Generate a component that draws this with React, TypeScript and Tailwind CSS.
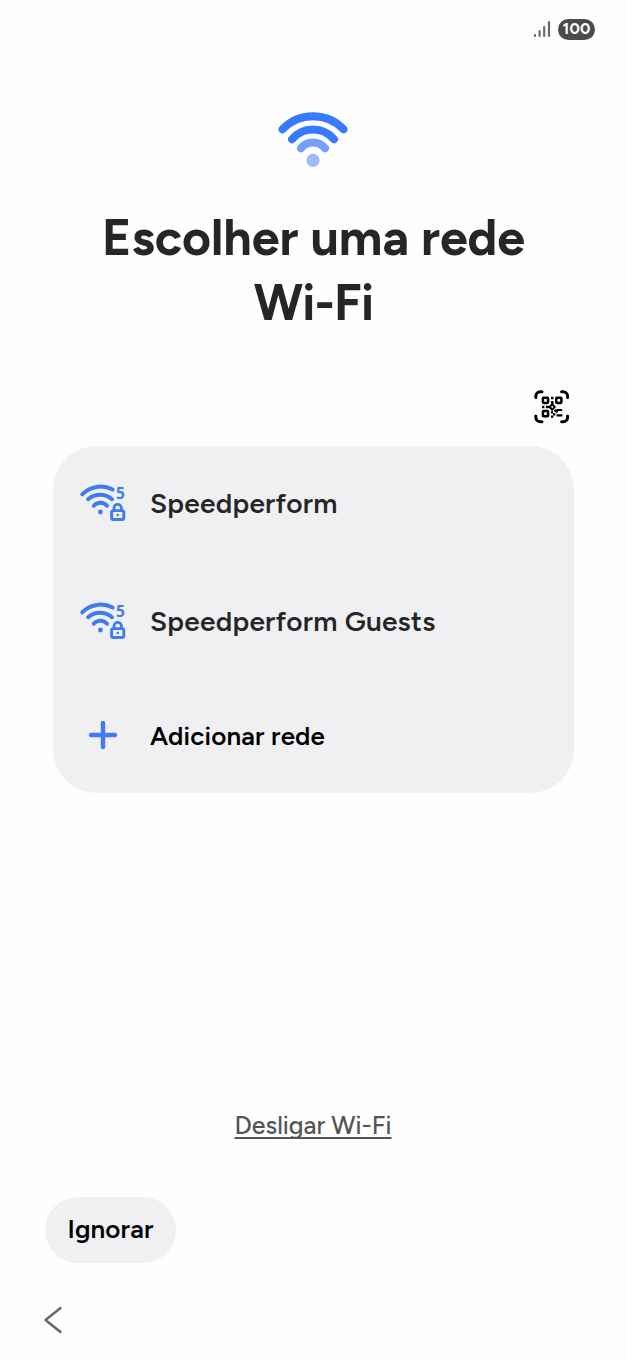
import React from 'react';

interface Network {
  ssid: string;
  band: string;
}

const networks: Network[] = [
  { ssid: 'Speedperform', band: '5' },
  { ssid: 'Speedperform Guests', band: '5' },
];

function StatusBar() {
  return (
    <div className="flex h-[58px] items-center justify-end gap-[7px] pr-8">
      <svg width="18" height="20" viewBox="0 0 18 20" fill="none" stroke="#6b6b6b" strokeWidth="2.2" strokeLinecap="round">
        <path d="M2 16v1M6.6 12.2V17M11.2 8V17M16 3V17" />
      </svg>
      <div className="flex h-[21px] w-[37px] items-center justify-center rounded-full bg-[#4b4b4b] text-[16px] font-bold tracking-[0.1px] text-white">
        100
      </div>
    </div>
  );
}

function WifiLogo() {
  return (
    <svg width="72" height="58" viewBox="0 0 72 58" fill="none" strokeWidth="8" strokeLinecap="round">
      <path d="M5.5 19.3A42.3 42.3 0 0 1 66.5 19.3" stroke="#387aff" />
      <path d="M15 29.3A27.4 27.4 0 0 1 57 29.3" stroke="#387aff" />
      <path d="M24 38.3A15.3 15.3 0 0 1 48 38.3" stroke="#759ffb" />
      <circle cx="36" cy="50.4" r="6.6" fill="#a1b9f5" />
    </svg>
  );
}

function QrIcon() {
  return (
    <svg width="36" height="34" viewBox="0 0 36 34" fill="none" stroke="#000" strokeWidth="3">
      <path
        strokeLinecap="round"
        d="M1.8 7.5V6.3A4.6 4.6 0 0 1 6.4 1.7H8M27.6 1.7H29A4.6 4.6 0 0 1 33.6 6.3V7.5M33.6 26V27.2A4.6 4.6 0 0 1 29 31.8H27.6M8 31.8H6.4A4.6 4.6 0 0 1 1.8 27.2V26"
      />
      <g strokeWidth="2.5">
        <rect x="8.9" y="7.7" width="5.2" height="5.2" rx="0.8" />
        <rect x="22.2" y="7.7" width="5.2" height="5.2" rx="0.8" />
        <rect x="8.9" y="21" width="5.2" height="5.2" rx="0.8" />
        <path d="M17 8h2.4M8 17h2.4M12 17h4M18.2 11v3" />
        <path d="M18.2 14l-2.4 3 2.4 2.8 2.5-2.8z" strokeWidth="2" />
        <path d="M20.5 19.8l3 2.6M22.4 20h5.8M17 22.4h2.2M19 24.4h2.4M22.6 25.4h5.8M17 26.6h2.2" strokeWidth="2.2" />
      </g>
    </svg>
  );
}

function SecureWifiIcon({ band }: { band: string }) {
  return (
    <div className="relative -top-[3px] h-10 w-[50px] text-[#3f7cf0]">
      <svg width="50" height="40" viewBox="0 0 50 40" fill="none" stroke="currentColor" strokeWidth="4" strokeLinecap="round">
        <path d="M3.2 12.4A26 26 0 0 1 33.6 7.5" />
        <path d="M9.1 17.2A18.6 18.6 0 0 1 33 17.2" />
        <path d="M14.8 23.8A8.8 8.8 0 0 1 28 23.8" />
        <circle cx="21.4" cy="30" r="2.4" fill="currentColor" stroke="none" />
        <rect x="32.6" y="28.6" width="12.2" height="8.9" rx="1.8" strokeWidth="2.9" />
        <path d="M35 28V26A3.7 3.7 0 0 1 42.4 26V28" strokeWidth="2.8" />
        <circle cx="38.7" cy="33" r="1.3" fill="currentColor" stroke="none" />
      </svg>
      <span className="absolute top-[2px] left-[37px] font-['Noto_Sans',sans-serif] text-[15.5px] leading-[18px] font-bold">
        {band}
      </span>
    </div>
  );
}

function NetworkRow({ network }: { network: Network }) {
  return (
    <li className="flex h-[118px] items-center pl-[26px]">
      <SecureWifiIcon band={network.band} />
      <span className="mb-1 ml-[21px] text-[28px] font-semibold tracking-[0.25px] text-[#252628]">{network.ssid}</span>
    </li>
  );
}

export default function App() {
  return (
    <div className="flex h-[1360px] w-[627px] flex-col bg-[#fefefe] font-['Figtree','Inter',sans-serif]">
      <StatusBar />

      <header className="flex flex-col items-center pt-[52px]">
        <div className="mr-[2px]">
          <WifiLogo />
        </div>
        <h1 className="mt-[37px] text-center text-[50px] leading-[65px] font-bold text-[#252628]">
          Escolher uma rede
          <br />
          <span className="tracking-[-0.8px]">Wi-Fi</span>
        </h1>
      </header>

      <div className="mt-[55px] flex justify-end pr-[57px]">
        <button type="button" title="QR">
          <QrIcon />
        </button>
      </div>

      <ul className="mx-[53px] mt-[22px] h-[347px] rounded-[44px] bg-[#f0f0f3]">
        {networks.map((network) => (
          <NetworkRow key={network.ssid} network={network} />
        ))}
        <li className="flex h-[108px] items-center pl-[35px]">
          <svg className="mb-[2px]" width="30" height="30" viewBox="0 0 30 30" stroke="#3d7cf7" strokeWidth="4.4" strokeLinecap="round">
            <path d="M15 3v24M3 15h24" />
          </svg>
          <span className="ml-[32px] text-[26px] font-semibold tracking-[0.15px] text-black">Adicionar rede</span>
        </li>
      </ul>

      <div className="mt-[314px] flex justify-center pr-px">
        <button
          type="button"
          className="text-[25px] leading-9 font-medium text-[#535456] underline decoration-2 underline-offset-3 [text-decoration-skip-ink:none]"
        >
          Desligar Wi-Fi
        </button>
      </div>

      <button
        type="button"
        className="mt-[54px] ml-[45px] flex h-[66px] w-[131px] items-center justify-center rounded-full bg-[#f0f0f3] pb-px text-[26px] font-semibold tracking-[0.15px] text-black"
      >
        Ignorar
      </button>

      <button type="button" title="Back" className="mt-[43px] ml-[43px] w-5">
        <svg width="20" height="28" viewBox="0 0 20 28" fill="none" stroke="#666" strokeWidth="2.4" strokeLinecap="round" strokeLinejoin="round">
          <path d="M17.5 2L2.5 14L17.5 26" />
        </svg>
      </button>
    </div>
  );
}
